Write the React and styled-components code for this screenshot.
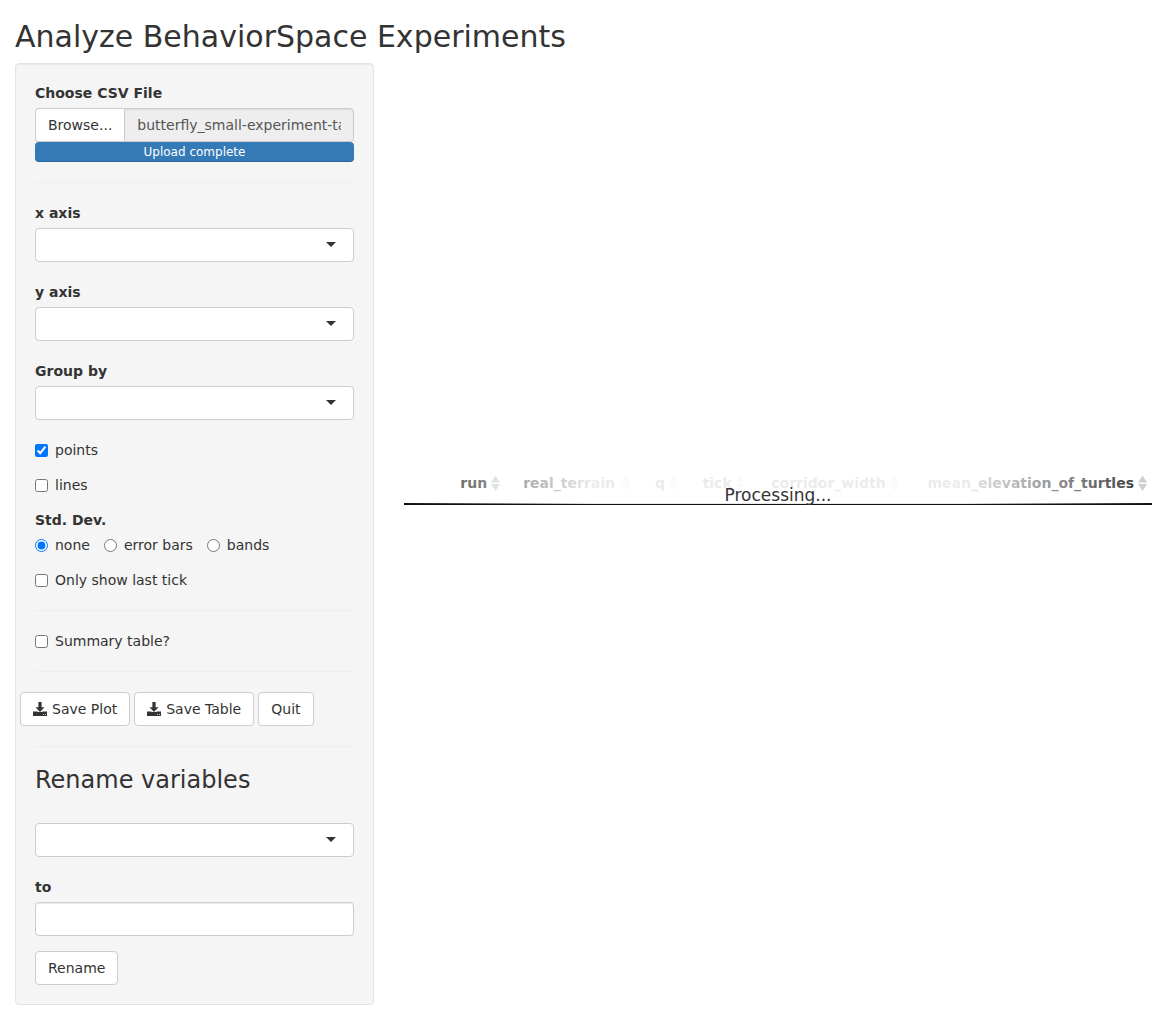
import React from "react";
import styled, { createGlobalStyle } from "styled-components";

const GlobalStyle = createGlobalStyle`
  *, *::before, *::after { box-sizing: border-box; }
  body {
    margin: 0;
    background: #fff;
    color: #333;
    font: 14px/20px "DejaVu Sans", Verdana, sans-serif;
  }
  button, input, select { font: inherit; color: inherit; }
`;

const Page = styled.div`
  padding: 20px 0 0 15px;
`;

const Title = styled.h1`
  margin: 0 0 10px;
  font-size: 30px;
  line-height: 33px;
  font-weight: 500;
`;

const Columns = styled.div`
  display: grid;
  grid-template-columns: 359fr 748fr;
  column-gap: 30px;
  align-items: start;
`;

const Sidebar = styled.form`
  display: flex;
  flex-direction: column;
  gap: 20px;
  min-width: 0;
  margin-bottom: 20px;
  padding: 19px;
  background: #f5f5f5;
  border: 1px solid #e3e3e3;
  border-radius: 4px;
  box-shadow: inset 0 1px 1px rgba(0, 0, 0, 0.05);
`;

const Stack = styled.div`
  display: flex;
  flex-direction: column;
  align-items: flex-start;
  gap: 15px;
`;

const Field = styled.div`
  display: flex;
  flex-direction: column;
  gap: 5px;
  width: 100%;
`;

const FieldLabel = styled.label`
  font-weight: 700;
`;

const Divider = styled.hr`
  width: 100%;
  height: 1px;
  margin: 0;
  border: 0;
  background: #eee;
`;

const TextInput = styled.input`
  width: 100%;
  min-width: 0;
  height: 34px;
  padding: 6px 12px;
  color: #555;
  background: #fff;
  border: 1px solid #ccc;
  border-radius: 4px;
  box-shadow: inset 0 1px 1px rgba(0, 0, 0, 0.075);
`;

const Button = styled.button`
  display: inline-flex;
  align-items: center;
  gap: 5px;
  height: 34px;
  padding: 6px 12px;
  white-space: nowrap;
  background: #fff;
  border: 1px solid #ccc;
  border-radius: 4px;
  cursor: pointer;
`;

const InputGroup = styled.div`
  display: flex;

  ${Button} {
    border-right: 0;
    border-radius: 4px 0 0 4px;
  }
  ${TextInput} {
    flex: 1;
    background: #eee;
    border-radius: 0 4px 4px 0;
  }
`;

const ProgressBar = styled.div`
  height: 20px;
  color: #fff;
  font-size: 12px;
  text-align: center;
  background: #337ab7;
  border-radius: 4px;
  box-shadow: inset 0 -1px 0 rgba(0, 0, 0, 0.15);
`;

const SelectBox = styled.div`
  position: relative;
  width: 100%;

  select {
    display: block;
    width: 100%;
    height: 34px;
    padding: 6px 40px 6px 12px;
    appearance: none;
    background: #fff;
    border: 1px solid #ccc;
    border-radius: 4px;
  }
  svg {
    position: absolute;
    top: 14px;
    right: 18px;
    pointer-events: none;
  }
`;

const Choice = styled.label`
  display: flex;
  align-items: center;
  gap: 7px;

  input {
    width: 13px;
    height: 13px;
    margin: 1px 0 0;
  }
`;

const RadioGroup = styled.fieldset`
  min-width: 0;
  margin: 0;
  padding: 0;
  border: 0;

  legend {
    padding: 0 0 5px;
    font-weight: 700;
  }
`;

const RadioRow = styled.div`
  display: flex;
  gap: 14px;
`;

const ButtonRow = styled.div`
  display: flex;
  gap: 4px;
  margin: 0 -15px;
`;

const Heading = styled.h2`
  margin: 0 0 10px;
  font-size: 24px;
  line-height: 26px;
  font-weight: 500;
`;

const Main = styled.main`
  min-width: 0;
`;

const PlotArea = styled.div`
  height: 400px;
`;

const TableWrap = styled.div`
  position: relative;
  overflow-x: clip;
  border-bottom: 1px solid #111;
`;

const DataTable = styled.table`
  width: 100%;
  border-collapse: separate;
  border-spacing: 0;

  th {
    padding: 0;
    border-bottom: 1px solid #111;
  }
  th:first-child {
    padding: 0 18px;
  }
`;

const SortButton = styled.button`
  display: flex;
  align-items: center;
  justify-content: ${(p) => (p.$numeric ? "flex-end" : "flex-start")};
  width: 100%;
  padding: 10px 0 10px 18px;
  font-weight: 700;
  background: none;
  border: 0;
  cursor: pointer;

  span {
    flex: ${(p) => (p.$numeric ? "none" : "1")};
    text-align: left;
  }
`;

const Processing = styled.div`
  position: absolute;
  inset: 0 0 auto;
  height: 41px;
  padding-top: 20px;
  font-size: 17px;
  line-height: 24px;
  text-align: center;
  background: linear-gradient(
    to right,
    rgba(255, 255, 255, 0) 0%,
    rgba(255, 255, 255, 0.9) 25%,
    rgba(255, 255, 255, 0.9) 75%,
    rgba(255, 255, 255, 0) 100%
  );
`;

const DownloadIcon = () => (
  <svg width="14" height="14" viewBox="0 0 14 14" fill="currentColor" aria-hidden="true">
    <path d="M5.4 0h3.2v5.2h2.9L7 10 2.5 5.2h2.9z" />
    <path
      fillRule="evenodd"
      d="M0 9.5h4.2L7 12l2.8-2.5H14V14H0zM10 12v.8h1V12zM12 12v.8h1V12z"
    />
    <path d="M4 10h6v2H4z" />
  </svg>
);

const SortIcon = () => (
  <svg width="18" height="16" viewBox="0 0 18 16" fill="#ccc" aria-hidden="true">
    <path d="M8.5 0.5l4.5 7H4zM4 9h9l-4.5 7z" />
  </svg>
);

function Select({ id, label }) {
  return (
    <Field>
      {label && <FieldLabel htmlFor={id}>{label}</FieldLabel>}
      <SelectBox>
        <select id={id} aria-label={label ? undefined : "Variable"} />
        <svg width="10" height="5" viewBox="0 0 10 5" fill="#333" aria-hidden="true">
          <path d="M0 0h10L5 5z" />
        </svg>
      </SelectBox>
    </Field>
  );
}

function Checkbox({ children, checked }) {
  return (
    <Choice>
      <input type="checkbox" defaultChecked={checked} />
      {children}
    </Choice>
  );
}

const columns = [
  { name: "run", numeric: true },
  { name: "real_terrain", numeric: false },
  { name: "q", numeric: true },
  { name: "tick", numeric: true },
  { name: "corridor_width", numeric: true },
  { name: "mean_elevation_of_turtles", numeric: true },
];

export default function App() {
  return (
    <Page>
      <GlobalStyle />
      <Title>Analyze BehaviorSpace Experiments</Title>
      <Columns>
        <Sidebar onSubmit={(e) => e.preventDefault()}>
          <Field>
            <FieldLabel htmlFor="file">Choose CSV File</FieldLabel>
            <div>
              <InputGroup>
                <Button type="button">Browse...</Button>
                <TextInput
                  id="file"
                  type="text"
                  readOnly
                  value="butterfly_small-experiment-table.csv"
                />
              </InputGroup>
              <ProgressBar>Upload complete</ProgressBar>
            </div>
          </Field>
          <Divider />
          <Select id="x" label="x axis" />
          <Select id="y" label="y axis" />
          <Select id="group" label="Group by" />
          <Stack>
            <Checkbox checked>points</Checkbox>
            <Checkbox>lines</Checkbox>
            <RadioGroup>
              <legend>Std. Dev.</legend>
              <RadioRow>
                {["none", "error bars", "bands"].map((name, i) => (
                  <Choice key={name}>
                    <input type="radio" name="deviation" defaultChecked={i === 0} />
                    {name}
                  </Choice>
                ))}
              </RadioRow>
            </RadioGroup>
            <Checkbox>Only show last tick</Checkbox>
          </Stack>
          <Divider />
          <Checkbox>Summary table?</Checkbox>
          <Divider />
          <ButtonRow>
            <Button type="button">
              <DownloadIcon />
              Save Plot
            </Button>
            <Button type="button">
              <DownloadIcon />
              Save Table
            </Button>
            <Button type="button">Quit</Button>
          </ButtonRow>
          <Divider />
          <Heading>Rename variables</Heading>
          <Select id="variable" />
          <Stack>
            <Field>
              <FieldLabel htmlFor="to">to</FieldLabel>
              <TextInput id="to" type="text" />
            </Field>
            <Button type="submit">Rename</Button>
          </Stack>
        </Sidebar>
        <Main>
          <PlotArea />
          <TableWrap>
            <DataTable>
              <thead>
                <tr>
                  <th />
                  {columns.map((c) => (
                    <th key={c.name} scope="col">
                      <SortButton type="button" $numeric={c.numeric}>
                        <span>{c.name}</span>
                        <SortIcon />
                      </SortButton>
                    </th>
                  ))}
                </tr>
              </thead>
            </DataTable>
            <Processing role="status">Processing...</Processing>
          </TableWrap>
        </Main>
      </Columns>
    </Page>
  );
}
